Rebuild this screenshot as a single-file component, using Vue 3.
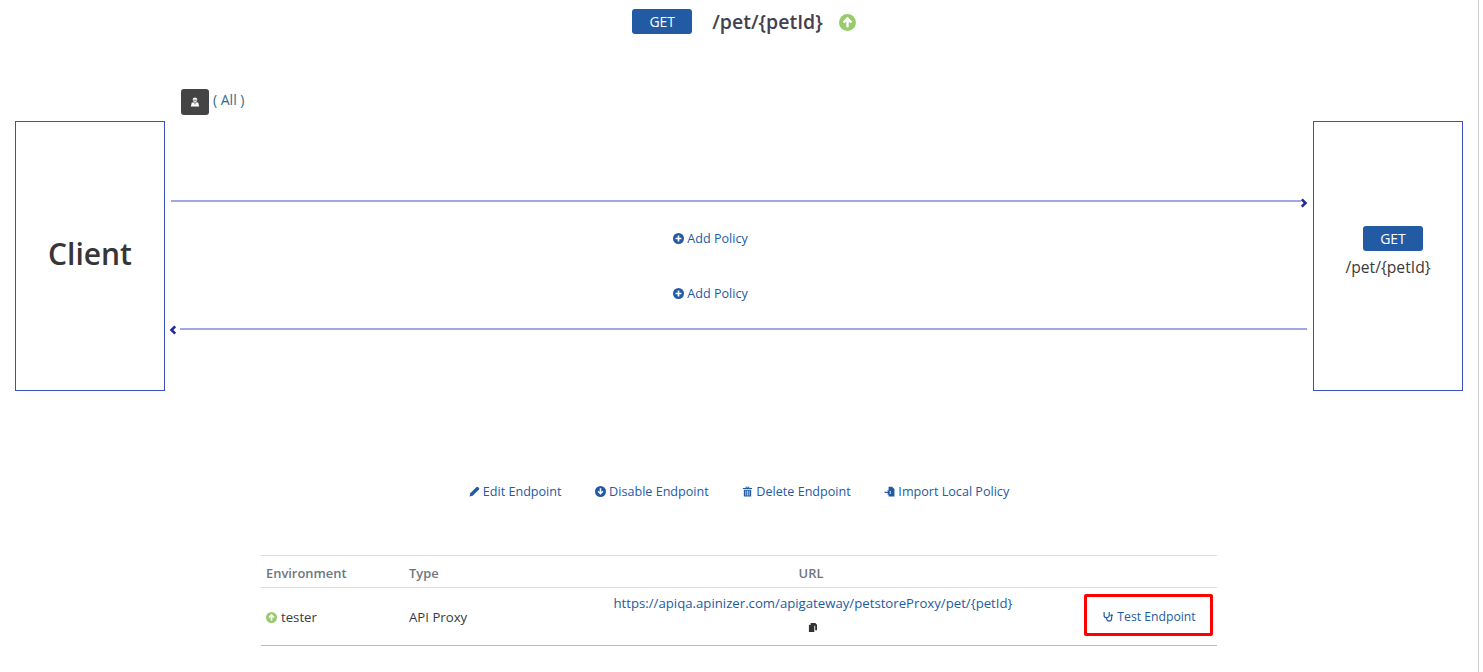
<script setup>
const actions = [
  { label: 'Edit Endpoint', icon: 'edit' },
  { label: 'Disable Endpoint', icon: 'down' },
  { label: 'Delete Endpoint', icon: 'trash' },
  { label: 'Import Local Policy', icon: 'import' },
]
</script>

<template>
  <div class="page">
    <header class="head">
      <span class="get">GET</span>
      <span class="head-path">/pet/{petId}</span>
      <svg class="up-big" viewBox="0 0 16 16"><circle cx="8" cy="8" r="8" fill="#97cb6b"/><path d="M8 12.500V4.500M4.300 8 8 4.300 11.700 8" fill="none" stroke="#fff" stroke-width="2.300"/></svg>
    </header>

    <div class="auth">
      <span class="auth-badge">
        <svg viewBox="0 0 10 10" width="10" height="10"><circle cx="5" cy="2.800" r="2.300" fill="#fff"/><path d="M.8 9.600 1.800 5.400h6.400l1 4.200z" fill="#fff"/><path d="M3.200 3.200h3.600" stroke="#444" stroke-width=".8"/><path d="M4.400 6.800h1.200" stroke="#444" stroke-width="1"/></svg>
      </span>
      <span class="auth-text">( All )</span>
    </div>

    <section class="flow">
      <div class="box client">Client</div>
      <div class="middle">
        <div class="line req"><svg class="chev right" viewBox="0 0 8 10"><path d="M1.800 1.300 5.500 5 1.800 8.700" fill="none" stroke="#23289a" stroke-width="2.600"/></svg></div>
        <a class="add first"><svg viewBox="0 0 12 12" class="ic"><circle cx="6" cy="6" r="6" fill="#225ba4"/><path d="M6 2.800v6.400M2.800 6h6.400" stroke="#fff" stroke-width="1.800"/></svg>Add Policy</a>
        <a class="add second"><svg viewBox="0 0 12 12" class="ic"><circle cx="6" cy="6" r="6" fill="#225ba4"/><path d="M6 2.800v6.400M2.800 6h6.400" stroke="#fff" stroke-width="1.800"/></svg>Add Policy</a>
        <div class="line res"><svg class="chev left" viewBox="0 0 8 10"><path d="M6.200 1.300 2.500 5 6.200 8.700" fill="none" stroke="#23289a" stroke-width="2.600"/></svg></div>
      </div>
      <div class="box backend">
        <span class="get">GET</span>
        <span class="back-path">/pet/{petId}</span>
      </div>
    </section>

    <nav class="actions">
      <a v-for="a in actions" :key="a.label" class="action">
        <svg v-if="a.icon === 'edit'" viewBox="0 0 12 12" class="ic"><path d="M.6 11.400l.8-3.400L8.300 1.100a1 1 0 0 1 1.400 0l1.200 1.200a1 1 0 0 1 0 1.400L4 10.600z" fill="#225ba4"/></svg>
        <svg v-else-if="a.icon === 'down'" viewBox="0 0 12 12" class="ic"><circle cx="6" cy="6" r="6" fill="#225ba4"/><path d="M6 2.500v5.800M3.400 5.800 6 8.400l2.600-2.600" fill="none" stroke="#fff" stroke-width="1.600"/></svg>
        <svg v-else-if="a.icon === 'trash'" viewBox="0 0 12 12" class="ic"><path d="M1 2.200h10v1.100H1zM4 2.200V.8h4v1.400H7V1.700H5v.5zM2 4h8v7.400H2z" fill="#225ba4"/><path d="M4.100 5v5.400M6 5v5.400M7.900 5v5.400" stroke="#fff" stroke-width=".7"/></svg>
        <svg v-else viewBox="0 0 12 12" class="ic"><path d="M5 .8h3.800L11.400 3.400v8H5V8.400h2.500V5.600H5z" fill="#225ba4"/><path d="M.6 7h5.200M4 4.800 6.200 7 4 9.200" fill="none" stroke="#225ba4" stroke-width="1.400"/></svg>
        {{ a.label }}
      </a>
    </nav>

    <table class="envs">
      <thead>
        <tr>
          <th class="c-env">Environment</th>
          <th class="c-type">Type</th>
          <th class="c-url">URL</th>
          <th class="c-test"></th>
        </tr>
      </thead>
      <tbody>
        <tr>
          <td class="c-env"><svg class="up-small" viewBox="0 0 16 16"><circle cx="8" cy="8" r="8" fill="#97cb6b"/><path d="M8 12.500V4.500M4.300 8 8 4.300 11.700 8" fill="none" stroke="#fff" stroke-width="2.500"/></svg>tester</td>
          <td class="c-type">API Proxy</td>
          <td class="c-url">
            <a class="url">https://apiqa.apinizer.com/apigateway/petstoreProxy/pet/{petId}</a>
            <svg class="copy" viewBox="0 0 10 10"><path d="M3 0h5l2 2v6H8V3H3z" fill="#333"/><path d="M1 2h6v8H1z" fill="#333"/></svg>
          </td>
          <td class="c-test">
            <a class="test">
              <svg viewBox="0 0 12 12" class="ic"><path d="M1.200 1v3.500a2.800 2.800 0 0 0 5.600 0V1M4 7.500v.8a2.700 2.700 0 0 0 5.400 0V6.500" fill="none" stroke="#225ba4" stroke-width="1.300"/><circle cx="9.400" cy="5" r="1.400" fill="#225ba4"/></svg>Test Endpoint
            </a>
          </td>
        </tr>
      </tbody>
    </table>
  </div>
</template>

<style>
html, body { margin: 0; background: #fff; }
</style>

<style scoped>
.page {
  box-sizing: border-box;
  width: 1479px;
  height: 672px;
  border-right: 1px solid #d0d0d0;
  font-family: "Open Sans", "Noto Sans", sans-serif;
  color: #3a3a3a;
  font-size: 12.600px;
  overflow: hidden;
}
.get {
  display: inline-block;
  width: 60px;
  height: 25px;
  line-height: 25px;
  text-align: center;
  background: #225ba4;
  color: #fff;
  font-size: 14px;
  border-radius: 3px;
}
.head {
  display: flex;
  align-items: center;
  justify-content: center;
  padding-top: 9px;
  height: 25px;
  margin-left: 10px;
}
.head-path {
  margin-left: 20px;
  font-size: 19.500px;
  font-weight: 600;
  color: #43404f;
}
.up-big { width: 17px; height: 17px; margin: 2px 0 0 16px; }
.auth {
  display: flex;
  align-items: flex-start;
  margin: 55px 0 0 181px;
  height: 32px;
}
.auth-badge {
  width: 28px;
  height: 26px;
  border-radius: 3px;
  background: #444;
  display: flex;
  align-items: center;
  justify-content: center;
}
.auth-text { margin-left: 4px; margin-top: 1px; color: #2f6b8f; font-size: 14px; }
.flow {
  display: flex;
  padding: 0 15px;
  height: 270px;
}
.box {
  box-sizing: border-box;
  flex: 0 0 150px;
  height: 270px;
  border: 1px solid #3a4fc0;
}
.client {
  display: flex;
  align-items: center;
  justify-content: center;
  padding-bottom: 6px;
  font-size: 30px;
  font-weight: 600;
  color: #363636;
}
.backend {
  display: flex;
  flex-direction: column;
  align-items: center;
  padding-top: 104px;
}
.backend .get { margin-left: 10px; }
.back-path { margin-top: 5px; font-size: 15.700px; font-weight: 500; color: #3a3a3a; }
.middle {
  flex: 1;
  display: flex;
  flex-direction: column;
  align-items: center;
  padding: 0 6px;
}
.line { position: relative; align-self: stretch; height: 2px; background: #a3a7de; }
.line.req { margin-top: 79px; margin-right: 6px; }
.line.res { margin-top: 26px; margin-left: 9px; }
.chev { position: absolute; width: 8px; height: 10px; }
.chev.right { right: -7px; top: -2px; }
.chev.left { left: -11px; top: -3px; }
.add {
  display: flex;
  align-items: center;
  color: #225ba4;
  height: 18px;
  margin-left: -57px;
  font-weight: 500;
}
.add.first { margin-top: 27px; }
.add.second { margin-top: 37px; }
.ic { width: 11px; height: 11px; margin-right: 3px; flex: none; }
.actions {
  display: flex;
  justify-content: center;
  gap: 33.600px;
  margin-top: 91px;
  height: 18px;
  align-items: center;
  font-weight: 500;
}
.action { display: flex; align-items: center; color: #225ba4; white-space: nowrap; }
.envs {
  border-collapse: collapse;
  width: 956px;
  margin: 55px 0 0 261px;
  table-layout: fixed;
  font-size: 13.200px;
}
.envs th, .envs td { box-sizing: border-box; }
.envs th {
  height: 32px;
  padding: 2px 5px 0;
  font-size: 12.900px;
  font-weight: 600;
  color: #6f7680;
  text-align: left;
  border-top: 1px solid #ddd;
  border-bottom: 1px solid #ddd;
}
.envs td {
  height: 58px;
  padding: 1px 5px 0;
  border-bottom: 1px solid #bbb;
}
.c-env { width: 143px; }
.c-type { width: 142px; }
.envs th.c-url { text-align: center; padding-right: 9px; }
.envs td.c-url { text-align: center; padding: 0 5px 8px; }
.c-test { width: 137px; }
.envs td.c-test { padding: 0 4px 4px; }
.up-small { width: 11px; height: 11px; margin-right: 4px; vertical-align: -1px; }
.url { display: block; color: #225ba4; }
.copy { display: block; width: 9px; height: 9px; margin: 11px auto 0; transform: translateX(-1px); }
.test {
  box-sizing: border-box;
  display: flex;
  align-items: center;
  justify-content: center;
  width: 129px;
  height: 42px;
  padding: 3px 0 0 2px;
  border: 3px solid #f00;
  border-radius: 2px;
  color: #225ba4;
  font-size: 12.200px;
  font-weight: 500;
  white-space: nowrap;
}
</style>
